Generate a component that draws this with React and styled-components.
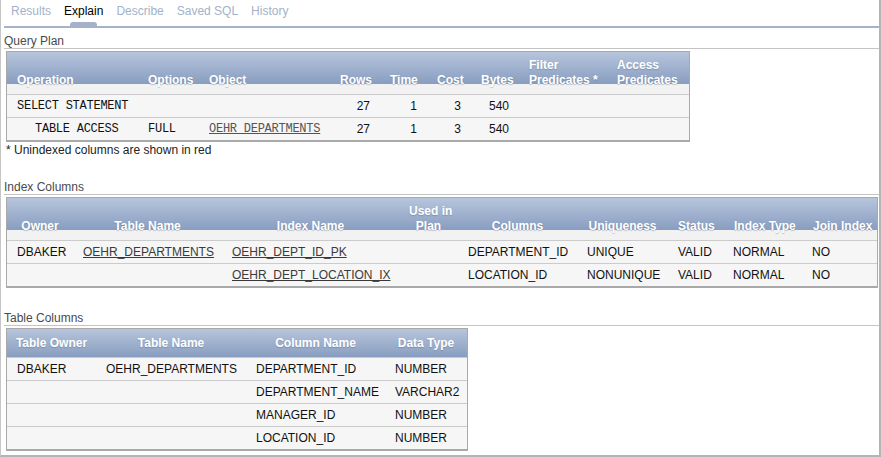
import React from "react";
import styled, { createGlobalStyle } from "styled-components";

const GlobalStyle = createGlobalStyle`
	html,
	body {
		margin: 0;
		padding: 0;
		background: #fff;
		font-family: "Liberation Sans", Arial, sans-serif;
		font-size: 12px;
	}
`;

const Frame = styled.div`
	box-sizing: border-box;
	height: 457px;
	padding-left: 3px;
	border-left: 1px solid #c6c6c6;
	border-right: 2px solid #b4b4b4;
	border-bottom: 2px solid #b4b4b4;
	background: #fff;
	overflow: hidden;
`;

const TabBar = styled.div`
	display: flex;
	gap: 1px;
	height: 26px;
	padding-left: 1px;
	border-bottom: 2px solid #a4b3c9;
`;

const Tab = styled.div`
	position: relative;
	padding: 3px 6px 0;
	line-height: 16px;
	color: ${(props) => (props.$active ? "#000" : "#a3b2c8")};
	cursor: pointer;

	&::after {
		content: "";
		display: ${(props) => (props.$active ? "block" : "none")};
		position: absolute;
		left: 50%;
		bottom: 0;
		width: 27px;
		height: 4px;
		margin-left: -14px;
		border-radius: 3px 3px 0 0;
		background: #a4b3c9;
	}
`;

const SectionTitle = styled.div`
	margin-top: ${(props) => (props.$first ? "0" : "23px")};
	padding-top: ${(props) => (props.$first ? "6px" : "0")};
	line-height: 14px;
	color: #4a4a4a;
	border-bottom: 1px solid #c4c4c4;
`;

const Grid = styled.table`
	box-sizing: border-box;
	width: ${(props) => props.$w}px;
	margin: 2px 0 0 2px;
	border: 1px solid #a9a9a9;
	border-bottom-width: 2px;
	border-spacing: 0;
	border-collapse: separate;
	table-layout: fixed;
`;

// header cells: the blue band either fills the cell or stops short of the bottom
const Head = styled.th`
	box-sizing: border-box;
	width: ${(props) => props.$w}px;
	padding: ${(props) => (props.$full ? "7px 4px 6px" : "6px 10px 6px")};
	line-height: 15px;
	font-size: 12px;
	font-weight: bold;
	color: #fff;
	text-align: ${(props) => props.$align || "left"};
	vertical-align: ${(props) => (props.$full ? "middle" : "bottom")};
	white-space: nowrap;
	text-shadow: 0 1px 1px rgba(60, 80, 110, 0.3);
	background-color: #f2f2f2;
	background-image: linear-gradient(#b7c5dc, #889dc0);
	background-repeat: no-repeat;
	background-size: ${(props) => (props.$full ? "100% 100%" : "100% 32px")};
`;

const Cell = styled.td`
	height: 22px;
	padding: 0 10px 0 ${(props) => props.$indent || 10}px;
	border-top: 1px solid #cbcbcb;
	background: #f6f6f6;
	line-height: 22px;
	color: #111;
	white-space: nowrap;
	text-align: ${(props) => (props.$num ? "right" : "left")};
	font-family: ${(props) =>
		props.$mono ? "\"Liberation Mono\", \"Courier New\", monospace" : "inherit"};
	font-size: 12px;
	letter-spacing: ${(props) => (props.$mono ? "-0.25px" : "normal")};
`;

const Link = styled.a`
	color: ${(props) => (props.$mono ? "#555" : "#3a3a3a")};
	text-decoration: underline;
	cursor: pointer;
`;

const Note = styled.div`
	margin-top: 1px;
	padding-left: 2px;
	line-height: 14px;
	color: #222;
`;

const tabs = ["Results", "Explain", "Describe", "Saved SQL", "History"];

const planCols = [
	{ label: "Operation", w: 131 },
	{ label: "Options", w: 61 },
	{ label: "Object", w: 131 },
	{ label: "Rows", w: 50, num: true },
	{ label: "Time", w: 47, num: true },
	{ label: "Cost", w: 44, num: true },
	{ label: "Bytes", w: 48, num: true },
	{ label: ["Filter", "Predicates *"], w: 88 },
	{ label: ["Access", "Predicates"], w: 82 },
];

const planRows = [
	{ op: "SELECT STATEMENT", indent: 10, options: "", object: "", rows: 27, time: 1, cost: 3, bytes: 540 },
	{ op: "TABLE ACCESS", indent: 28, options: "FULL", object: "OEHR_DEPARTMENTS", rows: 27, time: 1, cost: 3, bytes: 540 },
];

const indexCols = [
	{ label: "Owner", w: 66 },
	{ label: "Table Name", w: 149 },
	{ label: "Index Name", w: 177 },
	{ label: ["Used in", "Plan"], w: 59 },
	{ label: "Columns", w: 119 },
	{ label: "Uniqueness", w: 91 },
	{ label: "Status", w: 56 },
	{ label: "Index Type", w: 79 },
	{ label: "Join Index", w: 74 },
];

const indexRows = [
	{ owner: "DBAKER", table: "OEHR_DEPARTMENTS", index: "OEHR_DEPT_ID_PK", column: "DEPARTMENT_ID", uniq: "UNIQUE" },
	{ owner: "", table: "", index: "OEHR_DEPT_LOCATION_IX", column: "LOCATION_ID", uniq: "NONUNIQUE" },
];

const tableCols = [
	{ label: "Table Owner", w: 89 },
	{ label: "Table Name", w: 150 },
	{ label: "Column Name", w: 139 },
	{ label: "Data Type", w: 82 },
];

const tableRows = [
	["DBAKER", "OEHR_DEPARTMENTS", "DEPARTMENT_ID", "NUMBER"],
	["", "", "DEPARTMENT_NAME", "VARCHAR2"],
	["", "", "MANAGER_ID", "NUMBER"],
	["", "", "LOCATION_ID", "NUMBER"],
];

const widthOf = (cols) => cols.reduce((sum, col) => sum + col.w, 0) + 2;

const renderLabel = (label) => {
	if (!Array.isArray(label)) {
		return label;
	}
	return (
		<>
			{label[0]}
			<br />
			{label[1]}
		</>
	);
};

const App = () => {
	return (
		<Frame>
			<GlobalStyle />
			<TabBar>
				{tabs.map((tab) => (
					<Tab key={tab} $active={tab === "Explain"}>
						{tab}
					</Tab>
				))}
			</TabBar>

			<SectionTitle $first>Query Plan</SectionTitle>
			<Grid $w={widthOf(planCols)}>
				<thead>
					<tr>
						{planCols.map((col) => (
							<Head key={col.w + col.label} $w={col.w} $align={col.num ? "right" : "left"}>
								{renderLabel(col.label)}
							</Head>
						))}
					</tr>
				</thead>
				<tbody>
					{planRows.map((row) => (
						<tr key={row.op}>
							<Cell $mono $indent={row.indent}>{row.op}</Cell>
							<Cell $mono>{row.options}</Cell>
							<Cell $mono>{row.object && <Link $mono>{row.object}</Link>}</Cell>
							<Cell $num>{row.rows}</Cell>
							<Cell $num>{row.time}</Cell>
							<Cell $num>{row.cost}</Cell>
							<Cell $num>{row.bytes}</Cell>
							<Cell />
							<Cell />
						</tr>
					))}
				</tbody>
			</Grid>
			<Note>* Unindexed columns are shown in red</Note>

			<SectionTitle>Index Columns</SectionTitle>
			<Grid $w={widthOf(indexCols)}>
				<thead>
					<tr>
						{indexCols.map((col) => (
							<Head key={col.w + col.label} $w={col.w} $align="center">
								{renderLabel(col.label)}
							</Head>
						))}
					</tr>
				</thead>
				<tbody>
					{indexRows.map((row) => (
						<tr key={row.index}>
							<Cell>{row.owner}</Cell>
							<Cell>{row.table && <Link>{row.table}</Link>}</Cell>
							<Cell><Link>{row.index}</Link></Cell>
							<Cell />
							<Cell>{row.column}</Cell>
							<Cell>{row.uniq}</Cell>
							<Cell>VALID</Cell>
							<Cell $indent={9}>NORMAL</Cell>
							<Cell $indent={9}>NO</Cell>
						</tr>
					))}
				</tbody>
			</Grid>

			<SectionTitle>Table Columns</SectionTitle>
			<Grid $w={widthOf(tableCols)}>
				<thead>
					<tr>
						{tableCols.map((col) => (
							<Head key={col.label} $w={col.w} $align="center" $full>
								{col.label}
							</Head>
						))}
					</tr>
				</thead>
				<tbody>
					{tableRows.map((row) => (
						<tr key={row[2]}>
							{row.map((value, i) => (
								<Cell key={i}>{value}</Cell>
							))}
						</tr>
					))}
				</tbody>
			</Grid>
		</Frame>
	);
};

export default App;
